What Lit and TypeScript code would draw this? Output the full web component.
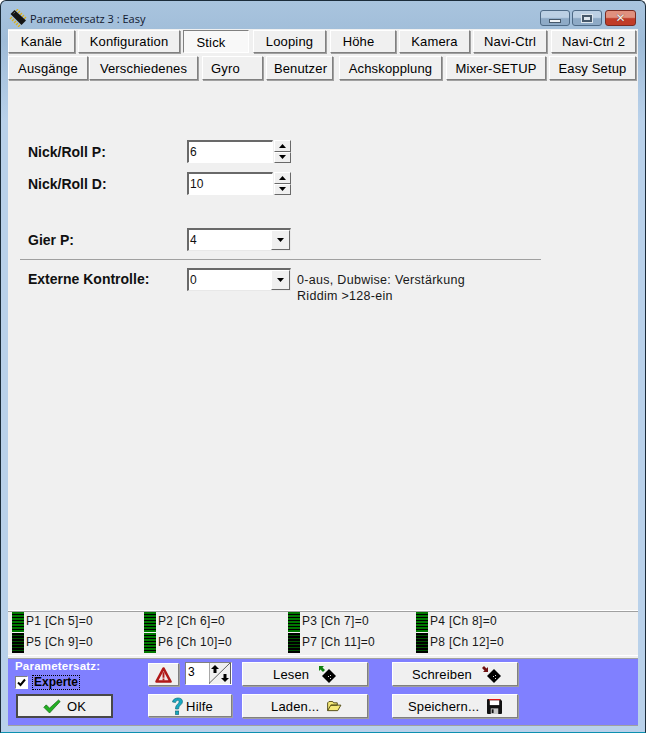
import { LitElement, html, css, svg } from "lit";
import { customElement } from "lit/decorators.js";

type Tab = { label: string; w: number; gap: number; active?: boolean; shift?: number };

const row1: Tab[] = [
  { label: "Kanäle", w: 67, gap: 0 },
  { label: "Konfiguration", w: 102, gap: 3 },
  { label: "Stick", w: 66, gap: 3, active: true, shift: -10 },
  { label: "Looping", w: 73, gap: 4 },
  { label: "Höhe", w: 66, gap: 4, shift: -9 },
  { label: "Kamera", w: 71, gap: 3 },
  { label: "Navi-Ctrl", w: 74, gap: 3 },
  { label: "Navi-Ctrl 2", w: 85, gap: 4 },
];
const row2: Tab[] = [
  { label: "Ausgänge", w: 80, gap: 0 },
  { label: "Verschiedenes", w: 109, gap: 1 },
  { label: "Gyro", w: 61, gap: 4, shift: -14 },
  { label: "Benutzer", w: 67, gap: 3, shift: 2 },
  { label: "Achskopplung", w: 103, gap: 6 },
  { label: "Mixer-SETUP", w: 100, gap: 4 },
  { label: "Easy Setup", w: 87, gap: 3 },
];
const channels = [
  { t: "P1 [Ch 5]=0", on: true },
  { t: "P2 [Ch 6]=0", on: true },
  { t: "P3 [Ch 7]=0", on: true },
  { t: "P4 [Ch 8]=0", on: true },
  { t: "P5 [Ch 9]=0", on: false },
  { t: "P6 [Ch 10]=0", on: true },
  { t: "P7 [Ch 11]=0", on: false },
  { t: "P8 [Ch 12]=0", on: false },
];

const chip = svg`<svg width="18" height="18" viewBox="0 0 18 18">
  <g stroke="#d8b020" stroke-width="1.300"><path d="M3 8 1 10M5 10 3 12M7 12 5 14M9 14 7 16M11 16 9 18M7 2 9 0M9 4 11 2M11 6 13 4M13 8 15 6M15 10 17 8"/></g>
  <path d="M1.500 5 5.500 1 17 11.500 12.500 16z" fill="#141414"/><path d="M4.500 4.500 6 3" stroke="#666"/></svg>`;
const up = svg`<svg width="7" height="4" viewBox="0 0 7 4"><path d="M3.500 0 7 4H0z" fill="#000"/></svg>`;
const down = svg`<svg width="7" height="4" viewBox="0 0 7 4"><path d="M0 0h7L3.500 4z" fill="#000"/></svg>`;
const check = svg`<svg width="18" height="15" viewBox="0 0 22 18"><path d="M1 10l3-3 4 4L19 1l2 2L8 17z" fill="#22b022" stroke="#0c5c0c" stroke-width=".8"/></svg>`;
const warn = svg`<svg width="17" height="16" viewBox="0 0 18 17"><path d="M9 1.500 16.500 15.500H1.500z" fill="#f0e8e8" stroke="#b01818" stroke-width="2.600" stroke-linejoin="round"/><path d="M8 5.500h2v6H8zM8 12.300h2v2H8z" fill="#b01818"/></svg>`;
const help = svg`<svg width="13" height="20" viewBox="0 0 13 20"><path d="M1.500 6C2 1 11.500 .5 11.500 5.500c0 3.500-4 3.500-4 7.500H4.500c0-5 3.500-4.500 3.500-7.500C8 3.500 5 4 4.500 6.500z" fill="#18a8c0" stroke="#086070" stroke-width=".6"/><rect x="4.500" y="15" width="3.200" height="3.500" fill="#18a8c0" stroke="#086070" stroke-width=".6"/></svg>`;
const disk = (arrow: string, dx: number, flip: boolean) => svg`<svg width="20" height="20" viewBox="0 0 20 20">
  <g transform="translate(${dx} 4)"><path d="M7 0 14 7 7 14 0 7z" fill="#000"/><g fill="#ddd"><rect x="6" y="7" width="1" height="1"/><rect x="8" y="6" width="1" height="1"/><rect x="8" y="9" width="1" height="1"/></g></g>
  <g transform="translate(0 1)"><path d="M0 0h5L3.500 1.500 6 4 4 6 1.500 3.500 0 5z" fill="${arrow}" transform="${flip ? "rotate(180 3 3)" : ""}"/></g></svg>`;
const folder = svg`<svg width="15" height="11" viewBox="0 0 16 12"><path d="M.5 10.500V2L2 .5h4L7 2h4v2.500H4L.5 10.500h11L15 4.500H4" fill="#f4e878" stroke="#4a4410"/></svg>`;
const floppy = svg`<svg width="15" height="15" viewBox="0 0 16 16"><path d="M0 1q0-1 1-1h13l2 2v13q0 1-1 1H1q-1 0-1-1z" fill="#111"/><rect x="2" y="0" width="12" height="1.500" fill="#e01818"/><rect x="3" y="1.500" width="10" height="5" fill="#fff"/><rect x="4" y="10" width="8" height="6" fill="#c8c8c8"/><rect x="5" y="11" width="2" height="4" fill="#111"/></svg>`;

@customElement("app-root")
export class AppRoot extends LitElement {
  static styles = css`
    :host {
      display: block;
      width: 646px;
      height: 733px;
      overflow: hidden;
      font-family: "Liberation Sans", Arial, sans-serif;
      font-size: 12px;
      color: #000;
    }
    .window {
      box-sizing: border-box;
      width: 646px;
      height: 733px;
      display: flex;
      flex-direction: column;
      border: 1px solid #1b2c3a;
      border-bottom-color: #0c90b0;
      border-radius: 6px 6px 0 0;
      background: linear-gradient(#a9c4de 0, #9fbcd8 40px, #b9d1ea 120px, #b9d1ea 100%);
      padding: 0 7px 6px 7px;
    }
    .title {
      box-sizing: border-box;
      height: 28px;
      padding-top: 6px;
      flex: none;
      display: flex;
      align-items: center;
      gap: 3px;
      font: 11px "Open Sans", sans-serif;
      color: #101830;
      margin-left: 1px;
    }
    .controls {
      margin-left: auto;
      margin-right: 2px;
      display: flex;
      gap: 2px;
    }
    .ctl {
      box-sizing: border-box;
      width: 30px;
      height: 16px;
      border: 1px solid #4e6a86;
      border-radius: 3px;
      background: linear-gradient(#bcd0e4 0 45%, #8eaac6 55% 100%);
      display: flex;
      align-items: center;
      justify-content: center;
    }
    .ctl.close {
      width: 31px;
      margin-left: 1px;
      border-color: #7a2a20;
      background: linear-gradient(#e0907e 0 45%, #c03c28 55% 100%);
    }
    .min { width: 12px; height: 4px; background: #eef2f6; border: 1px solid #46586a; box-sizing: border-box; margin-top: 5px; }
    .max { width: 10px; height: 7px; border: 2px solid #46586a; background: #dde6ee; box-sizing: border-box; outline: 1px solid #dde6ee; }
    .x { font: bold 12px "DejaVu Sans", sans-serif; color: #f4f0ee; line-height: 1; text-shadow: 0 0 1px #401008; }
    .client {
      flex: 1;
      display: flex;
      flex-direction: column;
      background: #f0f0f0;
      min-height: 0;
      width: 630px;
      box-sizing: border-box;
      border-bottom: 1px solid #a0a0a0;
    }
    .tabs { display: flex; flex: none; }
    .tabs.one { margin-top: 1px; height: 23px; margin-bottom: 3px; }
    .tabs.two { height: 24px; margin-bottom: 2px; }
    .btn {
      box-sizing: border-box;
      display: flex;
      align-items: center;
      justify-content: center;
      background: #f0f0f0;
      border: 1px solid;
      border-color: #fff #808080 #808080 #fff;
      box-shadow: 1px 1px 0 #a0a0a0;
      font-size: 13px;
      letter-spacing: 0.15px;
      white-space: nowrap;
    }
    .tab.active {
      border-color: #808080 #fff #fff #808080;
      background: #f8f8f8;
      box-shadow: none;
      padding-top: 2px;
    }
    .form { flex: 1; min-height: 0; padding: 58px 0 0 12px; display: flex; flex-direction: column; }
    .frow {
      display: grid;
      grid-template-columns: 159px auto;
      align-items: center;
      padding-left: 8px;
      height: 23px;
      font-size: 14px;
      font-weight: bold;
      color: #101010;
    }
    .frow.d { margin-top: 9px; }
    .frow.g { margin-top: 33px; }
    .frow.e { align-items: start; height: auto; }
    .frow.e .lab { line-height: 23px; }
    hr {
      width: 521px;
      height: 1px;
      margin: 8px 0;
      border: 0;
      background: #a0a0a0;
    }
    .field {
      box-sizing: border-box;
      height: 23px;
      width: 86px;
      background: #fff;
      border: 1px solid;
      border-color: #696969 #fff #fff #696969;
      border-width: 2px 1px 1px 2px;
      font-weight: normal;
      font-size: 12px;
      padding: 2px 0 0 1px;
      line-height: 16px;
    }
    .ctrl { display: flex; align-items: flex-start; }
    .spin { display: flex; flex-direction: column; margin-left: 1px; }
    .spin div {
      box-sizing: border-box;
      width: 17px;
      height: 11.500px;
      display: flex;
      align-items: center;
      justify-content: center;
      background: #f0f0f0;
      border: 1px solid;
      border-color: #fff #696969 #696969 #fff;
    }
    .combo {
      box-sizing: border-box;
      width: 104px;
      height: 23px;
      background: #fff;
      border: 1px solid;
      border-color: #696969 #e8e8e8 #e8e8e8 #696969;
      border-width: 2px 1px 1px 2px;
      display: flex;
      font-weight: normal;
      font-size: 12px;
      line-height: 16px;
    }
    .combo span { flex: 1; padding: 2px 0 0 1px; }
    .combo i {
      width: 17px;
      flex: none;
      display: flex;
      align-items: center;
      justify-content: center;
      background: #f0f0f0;
      border: 1px solid;
      border-color: #fff #696969 #696969 #fff;
    }
    .note { font-weight: normal; font-size: 12.500px; line-height: 16px; margin: 4px 0 0 6px; letter-spacing: 0.3px; color: #181818; }
    .status {
      flex: none;
      height: 45px;
      box-sizing: border-box;
      border-top: 1px solid #a0a0a0;
      border-bottom: 1px solid #fff;
      box-shadow: 0 -1px 0 #fff;
      display: grid;
      grid-template-columns: 132px 144px 128px 1fr;
      grid-template-rows: 21px 21px;
      padding: 0 0 0 4px;
      font-size: 12px;
      letter-spacing: 0.3px;
      color: #181818;
    }
    .ch { display: flex; align-items: flex-start; gap: 2px; height: 21px; line-height: 18px; }
    .bar {
      width: 12px;
      height: 20px;
      flex: none;
      background: repeating-linear-gradient(#007800 0 2px, #000 2px 3px);
    }
    .bar.off { background: repeating-linear-gradient(#000 0 2px, #005000 2px 3px); }
    .panel {
      flex: none;
      height: 67px;
      margin-top: 2px;
      background: #8080ff;
      display: grid;
      grid-template-columns: 7px 133px 84px 10px 126px 24px 126px 1fr;
      grid-template-rows: 29px 24px;
      row-gap: 2px;
      padding-top: 4px;
      box-sizing: border-box;
      border-top: 1px solid #a0a0a0;
    }
    .pset { grid-column: 2; grid-row: 1; color: #fff; font: bold 11.500px "Liberation Sans", sans-serif; letter-spacing: 0.2px; line-height: 13px; margin-top: -3px; }
    .chk { display: flex; align-items: center; color: #000; margin-top: 3px; letter-spacing: 0; }
    .box {
      box-sizing: border-box;
      width: 13px;
      height: 13px;
      background: #fff;
      border: 1px solid;
      border-color: #808080 #fff #fff #808080;
      display: flex;
      align-items: center;
      justify-content: center;
    }
    .chk b { outline: 1px dotted #000; margin-left: 5px; padding: 0 1px; font-size: 12px; line-height: 13px; }
    .ok { grid-column: 2; grid-row: 2; width: 97px; margin-left: 1px; height: 24px; border: 2px solid #484848; box-shadow: none; gap: 6px; padding-top: 1px; }
    .tools { grid-column: 3; grid-row: 1; display: flex; gap: 6px; height: 24px; }
    .warnb { width: 31px; height: 23px; }
    .num { box-sizing: border-box; width: 47px; height: 23px; display: flex; background: #fff; border: 1px solid; border-color: #808080 #fff #fff #808080; font-size: 12px; margin-top: -1px; }
    .num span { flex: 1; padding: 2px 0 0 2px; }
    .num svg { flex: none; }
    .hilfe { grid-column: 3; grid-row: 2; height: 23px; gap: 2px; padding: 1px 0 0 4px; }
    .cell { height: 24px; justify-content: flex-start; padding-top: 1px; }
    .lesen { grid-column: 5; grid-row: 1; margin-top: -1px; padding-left: 30px; gap: 10px; }
    .schreiben { grid-column: 7; grid-row: 1; margin-top: -1px; padding-left: 19px; gap: 10px; }
    .laden { grid-column: 5; grid-row: 2; padding-left: 28px; gap: 8px; }
    .speichern { grid-column: 7; grid-row: 2; padding-left: 15px; gap: 8px; }
  `;

  private tabRow(items: Tab[], cls: string) {
    return html`<div class="tabs ${cls}">
      ${items.map((t) => {
        const s = t.shift ?? 0;
        const pad = s < 0 ? `padding-right:${-s}px` : s > 0 ? `padding-left:${s}px` : "";
        return html`<div
          class="btn tab ${t.active ? "active" : ""}"
          style="width:${t.w}px;margin-left:${t.gap}px;${pad}"
        >${t.label}</div>`;
      })}
    </div>`;
  }

  render() {
    return html`<div class="window">
      <div class="title">
        ${chip}<span>Parametersatz 3 : Easy</span>
        <div class="controls">
          <div class="ctl"><div class="min"></div></div>
          <div class="ctl"><div class="max"></div></div>
          <div class="ctl close"><span class="x">✕</span></div>
        </div>
      </div>
      <div class="client">
        ${this.tabRow(row1, "one")} ${this.tabRow(row2, "two")}
        <div class="form">
          <div class="frow">
            <span class="lab">Nick/Roll P:</span>
            <div class="ctrl"><div class="field">6</div><div class="spin"><div>${up}</div><div>${down}</div></div></div>
          </div>
          <div class="frow d">
            <span class="lab">Nick/Roll D:</span>
            <div class="ctrl"><div class="field">10</div><div class="spin"><div>${up}</div><div>${down}</div></div></div>
          </div>
          <div class="frow g">
            <span class="lab">Gier P:</span>
            <div class="combo"><span>4</span><i>${down}</i></div>
          </div>
          <hr />
          <div class="frow e">
            <span class="lab">Externe Kontrolle:</span>
            <div class="ctrl">
              <div class="combo"><span>0</span><i>${down}</i></div>
              <div class="note">0-aus, Dubwise: Verstärkung<br />Riddim &gt;128-ein</div>
            </div>
          </div>
        </div>
        <div class="status">
          ${channels.map(
            (c) => html`<div class="ch"><div class="bar ${c.on ? "" : "off"}"></div><span>${c.t}</span></div>`,
          )}
        </div>
        <div class="panel">
          <div class="pset">
            Parametersatz:
            <div class="chk">
              <div class="box"><svg width="9" height="9" viewBox="0 0 9 9"><path d="M1 4.500 3.500 7 8 1.500" fill="none" stroke="#000" stroke-width="2"/></svg></div>
              <b>Experte</b>
            </div>
          </div>
          <div class="tools">
            <div class="btn warnb">${warn}</div>
            <div class="num">
              <span>3</span>
              <svg width="22" height="21" viewBox="0 0 22 21">
                <rect width="22" height="21" fill="#f0f0f0"/>
                <path d="M0 0v21M0 20.500 21 0M21.500 0v21" stroke="#606060" fill="none"/>
                <path d="M6 2 10 6H7.500v4h-3V6H2z" fill="#000" />
                <path d="M16 19 12 15h2.500v-4h3v4H20z" fill="#000" />
              </svg>
            </div>
          </div>
          <div class="btn ok">${check}<span>OK</span></div>
          <div class="btn hilfe">${help}<span>Hilfe</span></div>
          <div class="btn cell lesen"><span>Lesen</span>${disk("#108010", 3, false)}</div>
          <div class="btn cell schreiben"><span>Schreiben</span>${disk("#701010", 5, true)}</div>
          <div class="btn cell laden"><span>Laden...</span>${folder}</div>
          <div class="btn cell speichern"><span>Speichern...</span>${floppy}</div>
        </div>
      </div>
    </div>`;
  }
}
